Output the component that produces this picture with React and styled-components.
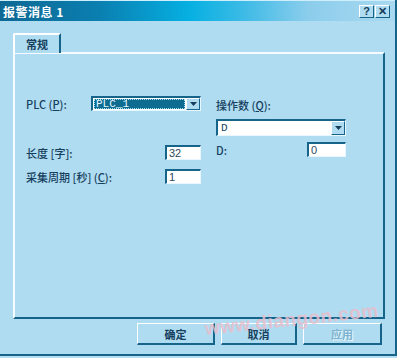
import React from "react";
import styled, { createGlobalStyle } from "styled-components";

const Global = createGlobalStyle`
  html, body {
    margin: 0;
    padding: 0;
    background: #b4def2;
  }
  body {
    font-family: "Liberation Sans", "Noto Sans CJK SC", sans-serif;
  }
`;

const DARK = "#16648a";
const TEXT = "#163f5e";
const FACE = "#afdcf1";

const Window = styled.div`
  position: relative;
  width: 395px;
  height: 354px;
  background: ${FACE};
  border-right: 2px solid ${DARK};
  border-bottom: 2px solid ${DARK};
  display: flex;
  flex-direction: column;
  overflow: hidden;
`;

const TitleBar = styled.div`
  height: 20px;
  flex: none;
  display: flex;
  align-items: center;
  justify-content: space-between;
  padding: 0 5px 0 3px;
  background: linear-gradient(
    90deg,
    #0e6893 0%,
    #0a7fb0 25%,
    #06b0e2 48%,
    #3ebbe6 62%,
    #8ccdec 78%,
    #a9d9f0 100%
  );
  border-top: 1px solid #cfeefb;
`;

const Title = styled.span`
  color: #ffffff;
  font-family: "Noto Sans CJK SC", sans-serif;
  font-weight: 700;
  font-size: 12px;
  letter-spacing: 0.5px;
`;

const Caps = styled.div`
  display: flex;
  gap: 1px;
  margin-top: 1px;
`;

const CapButton = styled.div`
  width: 15px;
  height: 13px;
  box-sizing: border-box;
  background: ${FACE};
  border-top: 1px solid #ffffff;
  border-left: 1px solid #ffffff;
  border-right: 1px solid ${DARK};
  border-bottom: 1px solid ${DARK};
  display: flex;
  align-items: center;
  justify-content: center;
  color: ${TEXT};
  font-weight: 700;
  font-size: 11px;
  line-height: 1;
`;

const Body = styled.div`
  flex: 1;
  display: flex;
  flex-direction: column;
  padding: 12px 10px 0 13px;
`;

const TabStrip = styled.div`
  display: flex;
  height: 19px;
  position: relative;
  z-index: 1;
`;

const Tab = styled.div`
  width: 48px;
  height: 20px;
  box-sizing: border-box;
  background: ${FACE};
  border-top: 2px solid #ffffff;
  border-left: 2px solid #ffffff;
  border-right: 2px solid ${DARK};
  border-top-left-radius: 2px;
  display: flex;
  align-items: center;
  justify-content: center;
  font-family: "Noto Sans CJK SC", sans-serif;
  font-size: 11px;
  font-weight: 700;
  color: ${TEXT};
`;

const Panel = styled.div`
  height: 267px;
  box-sizing: border-box;
  border-top: 2px solid #f4fcff;
  border-left: 2px solid #f4fcff;
  border-right: 2px solid ${DARK};
  border-bottom: 2px solid ${DARK};
  display: flex;
  gap: 15px;
  padding: 42px 0 0 11px;
`;

const Column = styled.div`
  display: flex;
  flex-direction: column;
  width: ${(p) => p.$w}px;
  padding-top: ${(p) => p.$top || 0}px;
`;

const Row = styled.div`
  display: flex;
  align-items: center;
  justify-content: space-between;
  height: ${(p) => p.$h || 15}px;
  margin-top: ${(p) => p.$mt || 0}px;
`;

const Label = styled.span`
  font-family: "Noto Sans CJK SC", sans-serif;
  font-size: 11px;
  font-weight: 500;
  color: ${TEXT};
  line-height: 12px;
  white-space: nowrap;
`;

const Key = styled.span`
  text-decoration: underline;
`;

const Combo = styled.div`
  width: ${(p) => p.$w}px;
  height: ${(p) => p.$h}px;
  box-sizing: border-box;
  background: #ffffff;
  border-top: 2px solid ${DARK};
  border-left: 2px solid ${DARK};
  border-right: 1px solid #e8f7ff;
  border-bottom: 1px solid #e8f7ff;
  display: flex;
  align-items: stretch;
`;

const ComboText = styled.div`
  flex: 1;
  display: flex;
  align-items: center;
  padding-left: 2px;
  margin: 1px;
  font-family: "Liberation Mono", monospace;
  font-size: 11px;
  color: ${(p) => (p.$selected ? "#e6f6ff" : TEXT)};
  background: ${(p) => (p.$selected ? "#0d6c8f" : "transparent")};
  outline: ${(p) => (p.$selected ? "1px dotted #9fe0f5" : "none")};
  outline-offset: -1px;
`;

const Arrow = styled.div`
  width: 14px;
  box-sizing: border-box;
  background: ${FACE};
  border-top: 1px solid #ffffff;
  border-left: 1px solid #ffffff;
  border-right: 1px solid ${DARK};
  border-bottom: 1px solid ${DARK};
  display: flex;
  align-items: center;
  justify-content: center;
`;

const Field = styled.div`
  width: ${(p) => p.$w}px;
  height: 15px;
  box-sizing: border-box;
  background: #ffffff;
  border-top: 2px solid ${DARK};
  border-left: 2px solid ${DARK};
  border-right: 1px solid #e8f7ff;
  border-bottom: 1px solid #e8f7ff;
  padding-left: 2px;
  display: flex;
  align-items: center;
  font-family: "Liberation Sans", sans-serif;
  font-size: 11px;
  color: #2a4a60;
`;

const Buttons = styled.div`
  display: flex;
  justify-content: flex-end;
  gap: 6px;
  padding: 4px 3px 0 0;
`;

const Button = styled.div`
  width: ${(p) => p.$w}px;
  height: 22px;
  box-sizing: border-box;
  background: ${FACE};
  border-top: 1px solid #ffffff;
  border-left: 1px solid #ffffff;
  border-right: 2px solid ${DARK};
  border-bottom: 2px solid ${DARK};
  display: flex;
  align-items: center;
  justify-content: center;
  font-family: "Noto Sans CJK SC", sans-serif;
  font-size: 11px;
  font-weight: 700;
  color: ${(p) => (p.$disabled ? "#7eb4cf" : TEXT)};
  text-shadow: ${(p) => (p.$disabled ? "1px 1px 0 #eaf8ff" : "none")};
`;

const Watermark = styled.div`
  position: absolute;
  left: 206px;
  top: 318px;
  font-family: "Liberation Sans", sans-serif;
  font-weight: 700;
  font-size: 19px;
  letter-spacing: 0.5px;
  color: rgba(232, 190, 204, 0.85);
  transform: rotate(-6deg);
  transform-origin: left bottom;
  pointer-events: none;
`;

const DownArrow = () => (
  <svg width="7" height="4" viewBox="0 0 7 4">
    <path d="M0 0h7L3.5 4z" fill="#163f5e" />
  </svg>
);

export default function App() {
  return (
    <>
      <Global />
      <Window>
        <TitleBar>
          <Title>报警消息 1</Title>
          <Caps>
            <CapButton>?</CapButton>
            <CapButton>✕</CapButton>
          </Caps>
        </TitleBar>
        <Body>
          <TabStrip>
            <Tab>常规</Tab>
          </TabStrip>
          <Panel>
            <Column $w={175}>
              <Row>
                <Label>
                  PLC (<Key>P</Key>):
                </Label>
                <Combo $w={110} $h={15}>
                  <ComboText $selected>PLC_1</ComboText>
                  <Arrow>
                    <DownArrow />
                  </Arrow>
                </Combo>
              </Row>
              <Row $mt={34}>
                <Label>长度 [字]:</Label>
                <Field $w={36}>32</Field>
              </Row>
              <Row $mt={9}>
                <Label>
                  采集周期 [秒] (<Key>C</Key>):
                </Label>
                <Field $w={36}>1</Field>
              </Row>
            </Column>
            <Column $w={130} $top={3}>
              <Label>
                操作数 (<Key>Q</Key>):
              </Label>
              <Row $h={17} $mt={8}>
                <Combo $w={130} $h={17}>
                  <ComboText>D</ComboText>
                  <Arrow>
                    <DownArrow />
                  </Arrow>
                </Combo>
              </Row>
              <Row $mt={6}>
                <Label>D:</Label>
                <Field $w={39}>0</Field>
              </Row>
            </Column>
          </Panel>
          <Buttons>
            <Button $w={78}>确定</Button>
            <Button $w={76}>取消</Button>
            <Button $w={79} $disabled>
              应用
            </Button>
          </Buttons>
        </Body>
        <Watermark>www.diangon.com</Watermark>
      </Window>
    </>
  );
}
